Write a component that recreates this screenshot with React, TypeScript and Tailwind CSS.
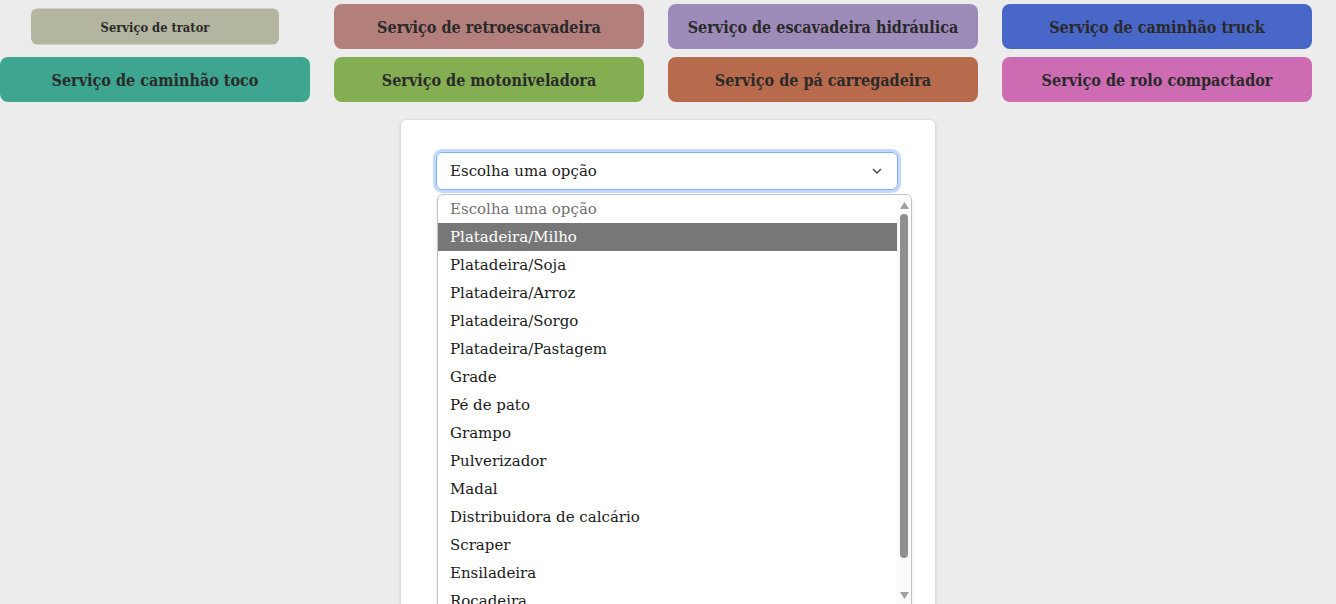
import React from "react";

const services = [
  { label: "Serviço de trator", bg: "bg-[#b3b59f]", small: true },
  { label: "Serviço de retroescavadeira", bg: "bg-[#b37f7a]" },
  { label: "Serviço de escavadeira hidráulica", bg: "bg-[#9d8bb9]" },
  { label: "Serviço de caminhão truck", bg: "bg-[#4966c9]" },
  { label: "Serviço de caminhão toco", bg: "bg-[#3ea590]" },
  { label: "Serviço de motoniveladora", bg: "bg-[#84ae52]" },
  { label: "Serviço de pá carregadeira", bg: "bg-[#b86b4c]" },
  { label: "Serviço de rolo compactador", bg: "bg-[#cd6bb3]" },
];

const options = [
  "Platadeira/Milho",
  "Platadeira/Soja",
  "Platadeira/Arroz",
  "Platadeira/Sorgo",
  "Platadeira/Pastagem",
  "Grade",
  "Pé de pato",
  "Grampo",
  "Pulverizador",
  "Madal",
  "Distribuidora de calcário",
  "Scraper",
  "Ensiladeira",
  "Roçadeira",
];

export default function App() {
  return (
    <div
      className="min-h-screen bg-[#ececec] overflow-hidden"
      style={{ fontFamily: '"DejaVu Serif", "Liberation Serif", serif' }}
    >
      <div className="grid grid-cols-4 gap-x-6 gap-y-2 pr-6 pt-1">
        {services.map((s) => (
          <button
            key={s.label}
            className={`${s.bg} h-[45px] rounded-lg pt-[2px] text-[16px] font-bold text-[#2a2a2a] ${
              s.small ? "scale-[0.8]" : ""
            }`}
            style={{ fontFamily: '"DejaVu Serif Condensed", "DejaVu Serif", serif' }}
          >
            {s.label}
          </button>
        ))}
      </div>

      <div className="relative mx-auto mt-[17px] h-[600px] w-[536px] rounded-md border border-[#dedede] bg-white px-[35px] pt-8 shadow-sm">
        <div className="flex h-[38px] w-[462px] items-center justify-between rounded-md border border-[#7fb0f7] pl-[13px] pr-[14px] text-[15px] text-[#1a1a1a] ring-[3px] ring-[#c4dafc]">
          <span>Escolha uma opção</span>
          <svg width="12" height="12" viewBox="0 0 12 12" fill="none" stroke="#444" strokeWidth="1.4">
            <path d="M2 4l4 4 4-4" />
          </svg>
        </div>

        <div className="absolute left-[36px] top-[74px] w-[475px] overflow-hidden rounded-t-md border border-[#c4c4c4] bg-white text-[15px] shadow-md">
          <div className="flex">
            <div className="flex-1">
              <div className="flex h-[28px] items-center pl-[12px] pt-[1px] text-[#707070]">Escolha uma opção</div>
              {options.map((o, i) => (
                <div
                  key={o}
                  className={`flex h-[28px] items-center pl-[12px] pt-[1px] ${
                    i === 0 ? "bg-[#777777] text-white" : "text-[#1a1a1a]"
                  }`}
                >
                  {o}
                </div>
              ))}
            </div>
            <div className="flex w-[14px] flex-col items-center bg-[#fafafa] pt-[7px]">
              <svg width="9" height="7" viewBox="0 0 9 7">
                <path d="M4.5 0L9 7H0z" fill="#a0a0a0" />
              </svg>
              <div className="mt-[5px] h-[344px] w-[8px] rounded-full bg-[#8f8f8f]" />
              <div className="mt-[34px]">
                <svg width="9" height="7" viewBox="0 0 9 7">
                  <path d="M0 0h9L4.5 7z" fill="#a0a0a0" />
                </svg>
              </div>
            </div>
          </div>
        </div>
      </div>
    </div>
  );
}
